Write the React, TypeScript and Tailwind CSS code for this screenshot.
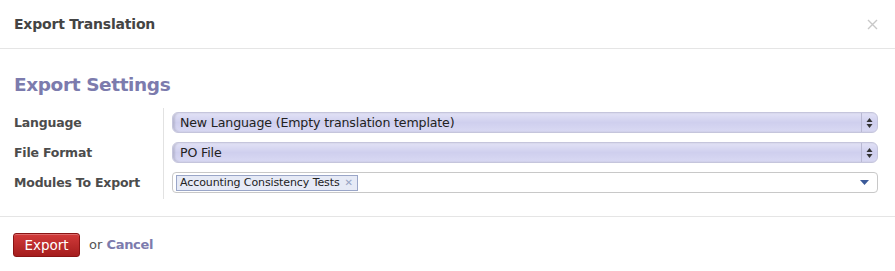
import React from "react";

function SelectArrows() {
  return (
    <svg width="7" height="12" viewBox="0 0 7 12" className="fill-[#333]">
      <path d="M3.5 1 L6.5 5 H0.5 Z" />
      <path d="M3.5 11 L6.5 7 H0.5 Z" />
    </svg>
  );
}

function FakeSelect({ value }: { value: string }) {
  return (
    <div className="flex h-[21px] items-stretch rounded-[6px] border border-[#c5c5dc] bg-gradient-to-b from-[#e2e2f6] via-[#cfcfee] to-[#d9d9f3] shadow-[inset_2px_0_2px_rgba(0,0,0,0.12)]">
      <span className="flex-1 pl-[7px] text-[12.6px] leading-[20px] tracking-[-0.15px] text-[#222]">{value}</span>
      <span className="flex w-[16px] items-center justify-center border-l border-[#b9b9d2]">
        <SelectArrows />
      </span>
    </div>
  );
}

export default function App() {
  return (
    <div className="h-[271px] w-[895px] bg-white font-['DejaVu_Sans',sans-serif] text-[#4c4c4c]">
      <header className="flex h-[49px] items-center justify-between border-b border-[#e5e5e5] pl-[14px] pr-[17px]">
        <h1 className="text-[14px] font-bold tracking-[-0.2px] text-[#444]">Export Translation</h1>
        <svg width="11" height="11" viewBox="0 0 11 11" className="stroke-[#c8c8c8]" strokeWidth="1.4">
          <path d="M1 1 L10 10 M10 1 L1 10" />
        </svg>
      </header>

      <section className="h-[168px] border-b border-[#e5e5e5] pl-[14px] pr-[17px] pt-[23px]">
        <h2 className="text-[18.5px] font-bold leading-[26px] tracking-[-0.4px] text-[#7c7bad]">Export Settings</h2>
        <div className="mt-[10px] flex">
          <div className="flex w-[150px] flex-col gap-[9px] border-r border-[#e2e2e2] pb-[6px] pt-[4px] text-[12.5px] font-bold tracking-[-0.2px]">
            <div className="h-[21px] leading-[21px]">Language</div>
            <div className="h-[21px] leading-[21px]">File Format</div>
            <div className="h-[21px] leading-[21px]">Modules To Export</div>
          </div>
          <div className="flex flex-1 flex-col gap-[9px] pl-[8px] pt-[4px]">
            <FakeSelect value="New Language (Empty translation template)" />
            <FakeSelect value="PO File" />
            <div className="flex h-[21px] items-center rounded-[4px] border border-[#c8c8c8] pl-[3px] pr-[8px]">
              <span className="flex h-[16px] items-center gap-[5px] border border-[#9aa6c8] bg-[#e6eaf6] pl-[3px] pr-[4px] text-[11px] leading-[14px] tracking-[-0.1px] text-[#222]">
                Accounting Consistency Tests
                <span className="text-[10px] font-bold text-[#97a3c3]">✕</span>
              </span>
              <span className="flex-1" />
              <svg width="9" height="5" viewBox="0 0 9 5" className="fill-[#3b5a99]">
                <path d="M0 0 H9 L4.5 5 Z" />
              </svg>
            </div>
          </div>
        </div>
      </section>

      <footer className="flex items-center gap-[9px] pl-[13px] pt-[16px]">
        <button className="h-[24px] w-[67px] rounded-[3px] border border-[#8a1414] bg-gradient-to-b from-[#d23a3a] to-[#a51d1d] text-[13.5px] text-white shadow-[inset_0_1px_0_rgba(255,255,255,0.25)]">
          Export
        </button>
        <span className="text-[13px] text-[#555]">
          or <a className="font-bold tracking-[-0.3px] text-[#7c7bad]">Cancel</a>
        </span>
      </footer>
    </div>
  );
}
